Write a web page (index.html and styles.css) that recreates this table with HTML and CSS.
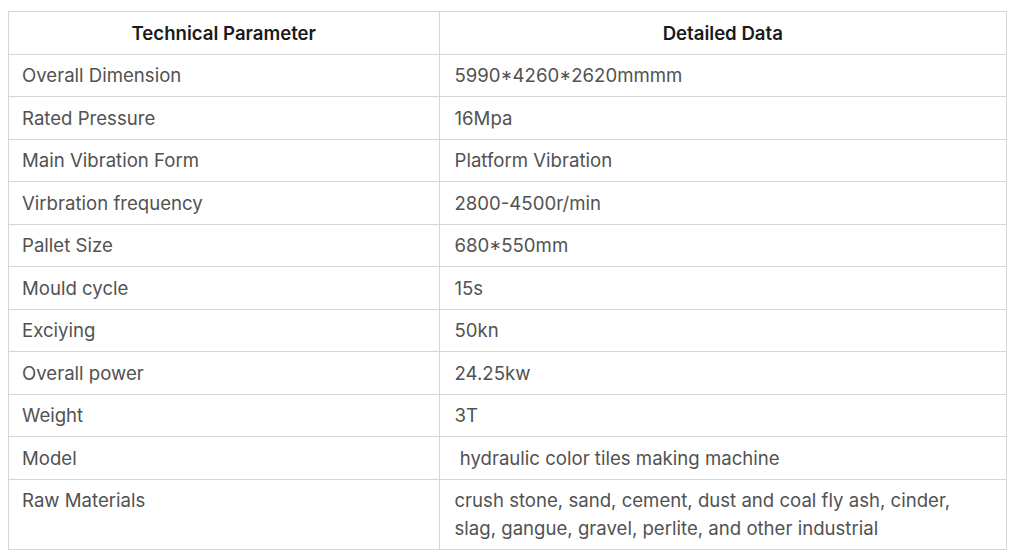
FILE: index.html
```html
<!DOCTYPE html>
<html>
<head>
<meta charset="utf-8">
<link rel="stylesheet" href="styles.css">
</head>
<body>
<table class="spec">
  <colgroup><col class="c1"><col class="c2"></colgroup>
  <thead>
    <tr><th>Technical Parameter</th><th>Detailed Data</th></tr>
  </thead>
  <tbody>
    <tr><td>Overall Dimension</td><td>5990*4260*2620mmmm</td></tr>
    <tr><td>Rated Pressure</td><td>16Mpa</td></tr>
    <tr><td>Main Vibration Form</td><td>Platform Vibration</td></tr>
    <tr><td>Virbration frequency</td><td>2800-4500r/min</td></tr>
    <tr><td>Pallet Size</td><td>680*550mm</td></tr>
    <tr><td>Mould cycle</td><td>15s</td></tr>
    <tr><td>Exciying</td><td>50kn</td></tr>
    <tr><td>Overall power</td><td>24.25kw</td></tr>
    <tr><td>Weight</td><td>3T</td></tr>
    <tr><td>Model</td><td>&nbsp;hydraulic color tiles making machine</td></tr>
    <tr><td>Raw Materials</td><td>crush stone, sand, cement, dust and coal fly ash, cinder,<br>slag, gangue, gravel, perlite, and other industrial</td></tr>
  </tbody>
</table>
</body>
</html>
```

FILE: styles.css
```css
html, body {
  margin: 0;
  padding: 0;
  background: #fff;
}
body {
  padding: 11px 9px 0 8px;
  font-family: Inter, "Noto Sans", sans-serif;
  color: #525252;
}
.spec {
  width: 999px;
  border-collapse: collapse;
  font-size: 18.6px;
}
.spec .c1 { width: 431px; }
.spec .c2 { width: 568px; }
.spec th, .spec td {
  border: 1px solid #d6d6d6;
  padding: 6.75px 13px;
  line-height: 28px;
  text-align: left;
  vertical-align: top;
}
.spec td:last-child { padding-left: 15px; }
.spec th {
  text-align: center;
  font-weight: 600;
  color: #1a1a1a;
}
```
